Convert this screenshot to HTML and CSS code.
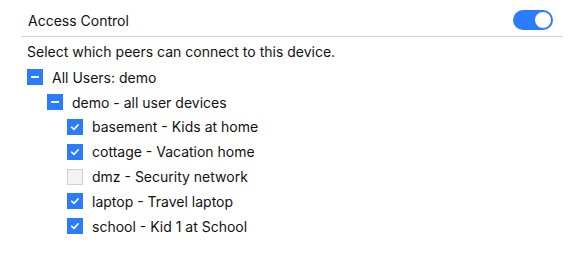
FILE: index.html
```html
<!DOCTYPE html>
<html>
<head>
<meta charset="utf-8">
<link rel="stylesheet" href="styles.css">
</head>
<body>
<div class="panel">
  <div class="header">
    <span class="title">Access Control</span>
    <span class="toggle"><span class="knob"></span></span>
  </div>
  <div class="content">
    <p class="desc">Select which peers can connect to this device.</p>
    <ul class="tree">
      <li class="row lvl1"><span class="box on"><span class="minus"></span></span><span class="label">All Users: demo</span></li>
      <li class="row lvl2"><span class="box on"><span class="minus"></span></span><span class="label">demo - all user devices</span></li>
      <li class="row lvl3"><span class="box on"><svg class="check" viewBox="0 0 16 16"><path d="M4.6 8.2 L7 10.4 L11.2 5.8" /></svg></span><span class="label">basement - Kids at home</span></li>
      <li class="row lvl3"><span class="box on"><svg class="check" viewBox="0 0 16 16"><path d="M4.6 8.2 L7 10.4 L11.2 5.8" /></svg></span><span class="label">cottage - Vacation home</span></li>
      <li class="row lvl3"><span class="box off"></span><span class="label">dmz - Security network</span></li>
      <li class="row lvl3"><span class="box on"><svg class="check" viewBox="0 0 16 16"><path d="M4.6 8.2 L7 10.4 L11.2 5.8" /></svg></span><span class="label">laptop - Travel laptop</span></li>
      <li class="row lvl3"><span class="box on"><svg class="check" viewBox="0 0 16 16"><path d="M4.6 8.2 L7 10.4 L11.2 5.8" /></svg></span><span class="label">school - Kid 1 at School</span></li>
    </ul>
  </div>
</div>
</body>
</html>
```
FILE: styles.css
```css
html, body {
  margin: 0;
  padding: 0;
  background: #ffffff;
}
body {
  font-family: Inter, "Noto Sans", sans-serif;
  font-size: 14px;
  color: #121212;
}
.panel {
  margin-left: 21px;
  width: 542px;
}
.header {
  display: flex;
  align-items: center;
  justify-content: space-between;
  box-sizing: border-box;
  height: 37px;
  padding: 4px 10px 0 7px;
  border-bottom: 1px solid #d4d4d4;
}
.title {
  font-size: 14px;
  line-height: 17px;
  font-weight: 400;
}
.toggle {
  display: flex;
  align-items: center;
  justify-content: flex-end;
  box-sizing: border-box;
  width: 40px;
  height: 20px;
  padding: 0 2px;
  border-radius: 10px;
  background: #2b7bff;
}
.knob {
  width: 16px;
  height: 16px;
  border-radius: 50%;
  background: #ffffff;
}
.content {
  padding-left: 6px;
}
.desc {
  margin: 0;
  padding-top: 6px;
  line-height: 17px;
}
.tree {
  list-style: none;
  margin: 0;
  padding: 0;
  padding-top: 5px;
}
.row {
  display: flex;
  align-items: center;
  height: 24.8px;
}
.row .label {
  line-height: 17px;
}
.lvl2 { padding-left: 20px; }
.lvl3 { padding-left: 40px; }
.box {
  box-sizing: border-box;
  display: flex;
  align-items: center;
  justify-content: center;
  width: 16px;
  height: 16px;
  margin-right: 9px;
  flex-shrink: 0;
}
.box.on {
  background: #2b7bff;
}
.box.off {
  background: #f3f3f3;
  border: 1px solid #cfcfcf;
}
.minus {
  width: 8px;
  height: 2px;
  background: #ffffff;
}
.check {
  width: 16px;
  height: 16px;
}
.check path {
  fill: none;
  stroke: #ffffff;
  stroke-width: 1.6;
  stroke-linecap: round;
  stroke-linejoin: round;
}
```
